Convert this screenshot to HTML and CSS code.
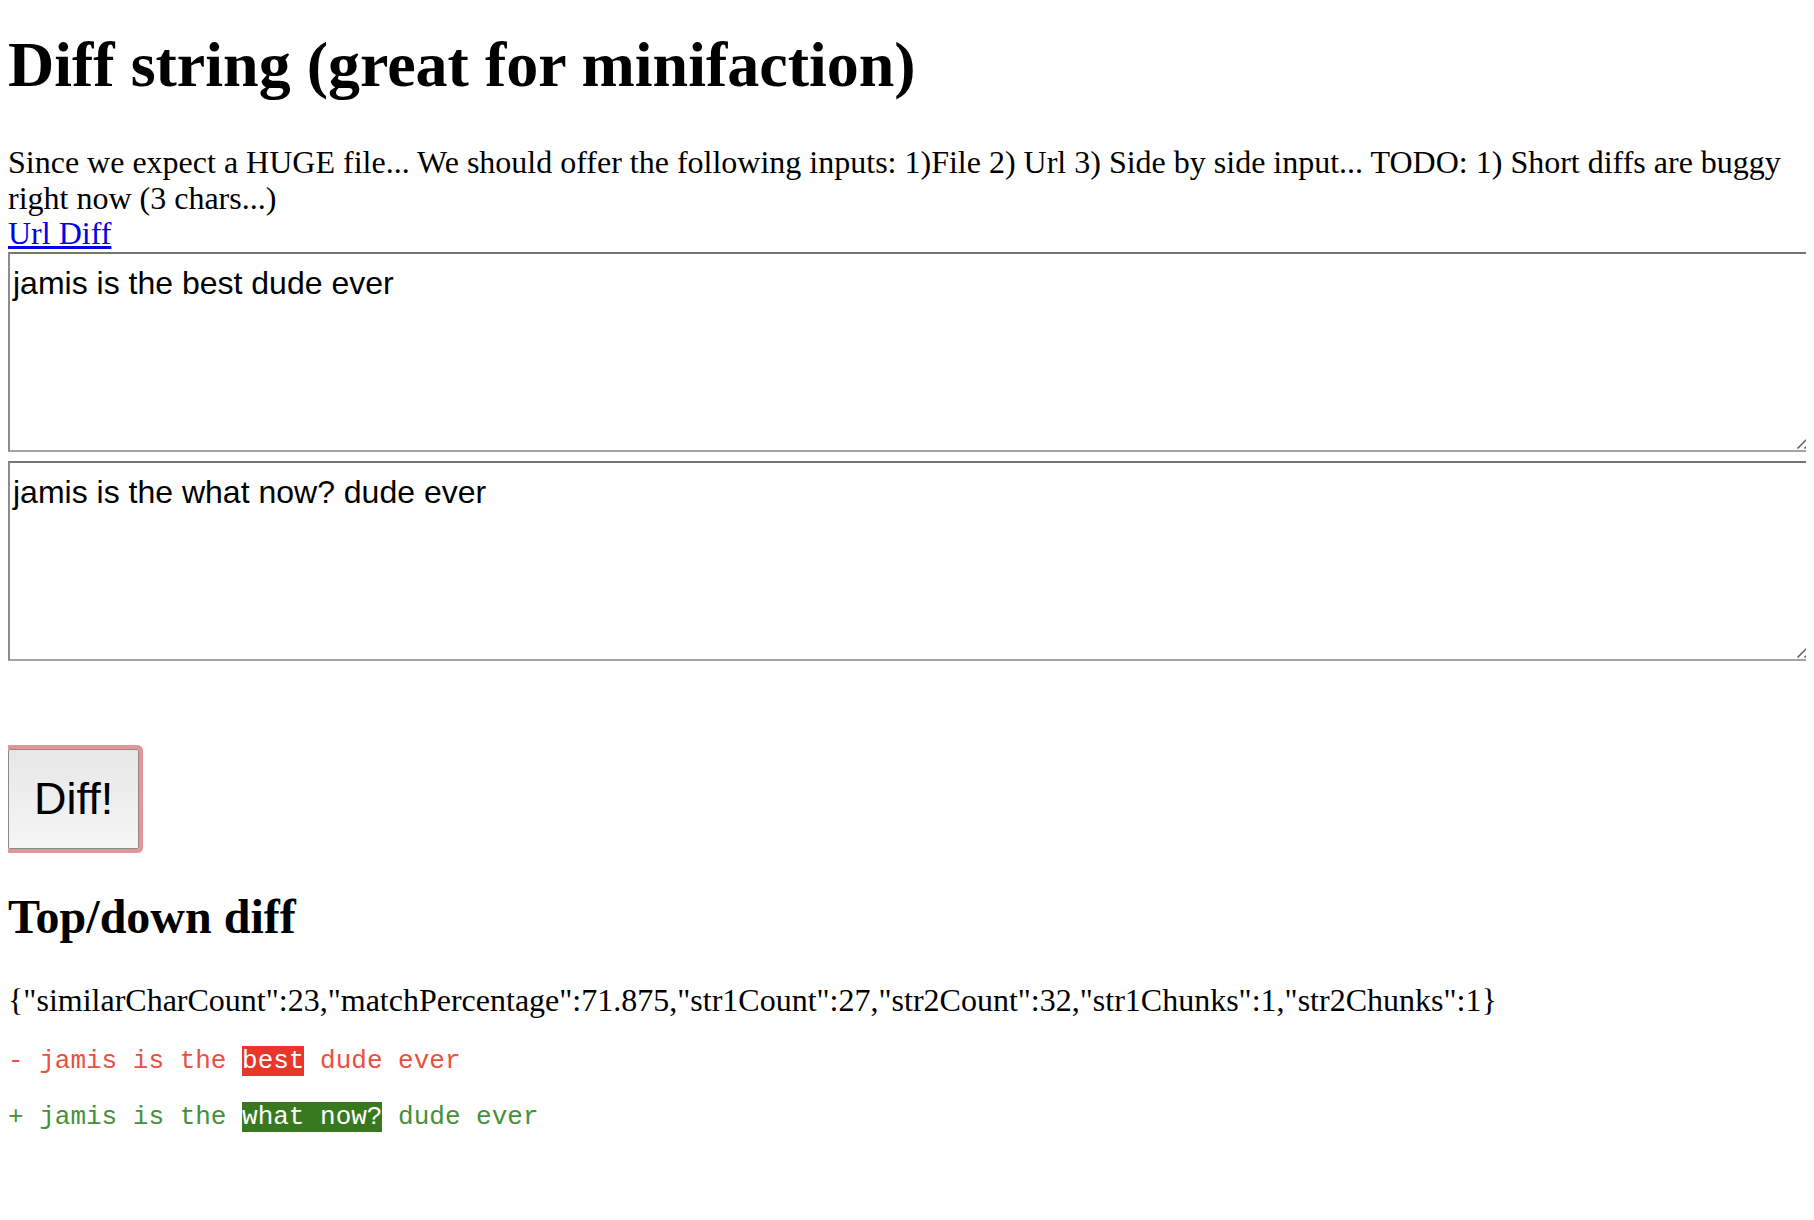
FILE: index.html
```html
<!DOCTYPE html>
<html lang="en">
<head>
<meta charset="utf-8">
<title>Diff string</title>
<link rel="stylesheet" href="styles.css">
</head>
<body>
<h1 class="title">Diff string (great for minifaction)</h1>
<div class="intro">Since we expect a HUGE file... We should offer the following inputs: 1)File 2) Url 3) Side by side input... TODO: 1) Short diffs are buggy right now (3 chars...)<br><a class="link" href="#">Url Diff</a></div>
<div class="inputs">
<div class="field-wrap">
<textarea class="field">jamis is the best dude ever</textarea>
<svg class="grip" width="16" height="16" viewBox="0 0 16 16" aria-hidden="true"><path d="M1.5 15.5 L15.5 1.5 M8.5 15.5 L15.5 8.5" stroke="#5c5c5c" stroke-width="1.5" fill="none"/></svg>
</div>
<div class="field-wrap">
<textarea class="field">jamis is the what now? dude ever</textarea>
<svg class="grip" width="16" height="16" viewBox="0 0 16 16" aria-hidden="true"><path d="M1.5 15.5 L15.5 1.5 M8.5 15.5 L15.5 8.5" stroke="#5c5c5c" stroke-width="1.5" fill="none"/></svg>
</div>
</div>
<button class="diff-btn" type="button">Diff!</button>
<h2 class="subtitle">Top/down diff</h2>
<div class="stats">{"similarCharCount":23,"matchPercentage":71.875,"str1Count":27,"str2Count":32,"str1Chunks":1,"str2Chunks":1}</div>
<pre class="line del">- jamis is the <span class="hl">best</span> dude ever</pre>
<pre class="line add">+ jamis is the <span class="hl">what now?</span> dude ever</pre>
</body>
</html>
```
FILE: styles.css
```css
html {
  overflow-x: hidden;
  background: #fff;
}
body {
  margin: 8px;
  font-family: "Liberation Serif", "Times New Roman", serif;
  font-size: 32px;
  color: #000;
}
.title {
  font-size: 64px;
  font-weight: bold;
  margin: 20px 0 43px;
}
.intro {
  margin: 0;
  line-height: 35.7px;
}
.link {
  color: #0000ee;
  text-decoration: underline;
}
.inputs {
  display: flex;
  flex-direction: column;
  gap: 8.7px;
}
.field-wrap {
  position: relative;
  width: calc(100% + 10px);
  height: 200px;
}
.field {
  display: block;
  box-sizing: border-box;
  width: 100%;
  height: 100%;
  margin: 0;
  padding: 11px 3px 2px;
  border: 2px solid;
  border-color: #767676 #9a9a9a #a3a3a3 #8c8c8c;
  font-family: "Liberation Sans", Arial, sans-serif;
  font-size: 32px;
  color: #000;
  background: #fff;
  resize: none;
  outline: none;
}
.grip {
  position: absolute;
  right: 4px;
  bottom: 3px;
  display: block;
}
.diff-btn {
  display: block;
  margin: 88px 0 0;
  height: 100px;
  padding: 0 25px;
  border: 1px solid #8a8a8a;
  border-radius: 2px;
  background: linear-gradient(#e7e7e7, #f5f5f5);
  box-shadow: 0 0 0 4px #e39597;
  font-family: "Liberation Sans", Arial, sans-serif;
  font-size: 45px;
  color: #000;
}
.subtitle {
  font-size: 48px;
  font-weight: bold;
  margin: 40px 0 38.5px;
}
.stats {
  margin: 0 0 27px;
}
.line {
  font-family: "Liberation Mono", "Courier New", monospace;
  font-size: 26px;
  margin: 26px 0;
}
.del {
  color: #ec4f41;
}
.del .hl {
  background: #e8362a;
  color: #fff;
}
.add {
  color: #46903a;
}
.add .hl {
  background: #38791f;
  color: #fff;
}
```
